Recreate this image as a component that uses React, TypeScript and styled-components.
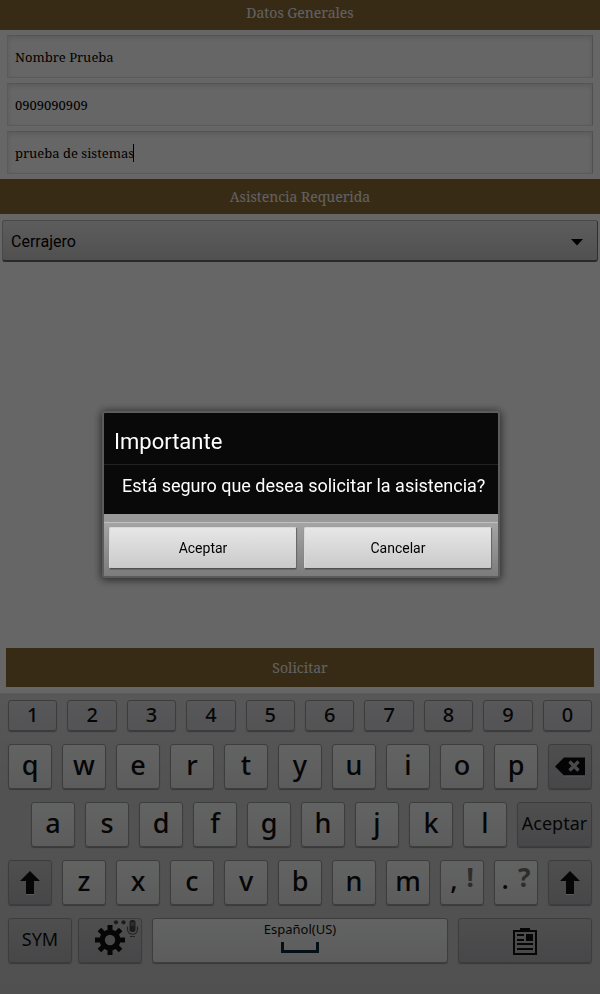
import React from 'react';
import styled, { createGlobalStyle, css } from 'styled-components';

const SERIF = '"Noto Serif", "DejaVu Serif Condensed", "DejaVu Serif", serif';
const ROBOTO = 'Roboto, "Noto Sans", sans-serif';
const KEYS = '"Noto Sans", "Open Sans", sans-serif';

const GlobalStyle = createGlobalStyle`
  *, *::before, *::after { box-sizing: border-box; }
  body { margin: 0; background: #fff; }
  button, input, select { margin: 0; font: inherit; color: inherit; }
`;

const Page = styled.div`
  display: flex;
  flex-direction: column;
  min-height: 100vh;
  background: #fff;
  color: #000;
`;

const SectionBar = styled.h2<{ $top?: boolean }>`
  display: flex;
  align-items: center;
  justify-content: center;
  height: ${(p) => (p.$top ? 30 : 35)}px;
  margin: 0;
  padding-bottom: ${(p) => (p.$top ? 4 : 0)}px;
  background: #8c6c37;
  color: #f4f4f4;
  font: 400 14px/20px ${SERIF};
`;

const Fields = styled.div`
  display: flex;
  flex-direction: column;
  gap: 5px;
  padding: 5px 7px;
`;

const Field = styled.label`
  position: relative;
  display: block;
`;

const TextBox = styled.input`
  display: block;
  width: 100%;
  height: 43px;
  padding: 0 7px;
  border: 1px solid #e4e4e4;
  border-top-color: #d4d4d4;
  border-right-color: #c8c8c8;
  border-radius: 0;
  outline: none;
  background: #fff;
  box-shadow: inset 0 2px 5px rgba(0, 0, 0, 0.12);
  color: #000;
  font: 13px/20px ${SERIF};
`;

const Caret = styled.span`
  position: absolute;
  top: 13px;
  left: 126px;
  width: 1px;
  height: 18px;
  background: #000;
`;

const Dropdown = styled.label`
  display: grid;
  align-items: center;
  margin: 6px 2px;

  > * { grid-area: 1 / 1; }
  > svg { justify-self: end; margin: 2px 14px 0 0; pointer-events: none; }
`;

const Select = styled.select`
  appearance: none;
  width: 100%;
  height: 42px;
  padding: 2px 40px 0 8px;
  border: 1px solid #b4b4b4;
  border-right-color: #777;
  border-bottom: 2px solid #686868;
  border-radius: 3px;
  background: linear-gradient(#e8e8e8, #c9c9c9);
  font: 16px/20px ${ROBOTO};
`;

const SubmitButton = styled.button`
  height: 39px;
  margin: auto 6px 6px;
  border: 0;
  background: #8c6c37;
  color: #f4f4f4;
  font: 14px/20px ${SERIF};
`;

const Keyboard = styled.div`
  display: flex;
  flex-direction: column;
  gap: 13px;
  padding: 7px 8px 31px;
  background: linear-gradient(#dadada, #cecece 30%, #c9c9c9);
  box-shadow: inset 0 1px #e4e4e4;
`;

const KeyRow = styled.div<{ $indent?: number }>`
  display: flex;
  gap: 10px;
  padding-left: ${(p) => p.$indent ?? 0}px;
`;

const KeyPair = styled.div`
  display: flex;
  flex: 134 1 134px;
  gap: 6px;
`;

type Tone = 'number' | 'letter' | 'action';

const tones = {
  number: css`
    height: 31px;
    padding-bottom: 2px;
    background: linear-gradient(#dcdce0, #d0d0d4);
    font-size: 20px;
  `,
  letter: css`
    height: 45px;
    padding-bottom: 4px;
    background: linear-gradient(#f4f8f5, #e6e6e6);
    font-size: 27px;
  `,
  action: css`
    height: 45px;
    padding-bottom: 4px;
    background: linear-gradient(#c4c4c6, #b2b2b6);
    font-size: 18px;
    font-weight: 400;
  `,
};

const Key = styled.button<{ $tone: Tone; $size?: number; $icon?: boolean }>`
  display: flex;
  flex: ${(p) => p.$size ?? 44} 1 ${(p) => p.$size ?? 44}px;
  align-items: center;
  justify-content: center;
  min-width: 0;
  padding: 0;
  border: 1px solid #989898;
  border-radius: 3px;
  box-shadow: 0 1px 1px #8c8c8c;
  font-family: ${KEYS};
  font-weight: 500;
  line-height: 1;
  color: #101010;
  ${(p) => tones[p.$tone]}
  ${(p) => p.$icon && 'padding-bottom: 0;'}
`;

const Symbols = styled.span`
  display: flex;
  gap: 9px;
  height: 100%;
  padding-top: 4px;
`;

const Hint = styled.span`
  margin-top: -1px;
  color: #707070;
  font-size: 26px;
  font-weight: 700;
`;

const SpaceLabel = styled.span`
  display: flex;
  flex-direction: column;
  align-items: center;
  gap: 6px;
  height: 100%;
  padding-top: 3px;
  font: 400 13px/14px ${KEYS};
`;

const Scrim = styled.div`
  position: fixed;
  inset: 0;
  display: flex;
  align-items: center;
  justify-content: center;
  padding: 0 100px 6px 102px;
  background: rgba(0, 0, 0, 0.6);
`;

const Dialog = styled.section`
  width: 100%;
  max-width: 480px;
  border: 2px solid #5c5c5c;
  border-radius: 3px;
  background: #090909;
  box-shadow: 0 1px 8px 1px rgba(0, 0, 0, 0.6);
  color: #fff;
  font-family: ${ROBOTO};
`;

const DialogTitle = styled.h1`
  margin: 0;
  padding: 15px 10px 8px;
  border-bottom: 1px solid #222;
  font-size: 22px;
  font-weight: 400;
  line-height: 28px;
`;

const DialogMessage = styled.p`
  margin: 0;
  padding: 9px 10px 16px 18px;
  font-size: 18px;
  line-height: 24px;
`;

const DialogFooter = styled.div`
  display: grid;
  grid-template-columns: 1fr 1fr;
  gap: 7px;
  padding: 4px 6px 7px 5px;
  border-top: 1px solid #c0c0c0;
  background: linear-gradient(#a4a4a4, #7c7c7c);
`;

const DialogBand = styled.div`
  height: 8px;
  background: #999;
`;

const DialogButton = styled.button`
  height: 42px;
  border: 1px solid #d8d8d8;
  border-right-color: #686868;
  border-bottom-color: #505050;
  border-radius: 2px;
  background: linear-gradient(#e6e6e6, #cacaca);
  box-shadow: 0 1px 1px #666;
  color: #000;
  font: 14px/20px ${ROBOTO};
`;

const ShiftIcon = () => (
  <svg width="20" height="24" viewBox="0 0 20 24" aria-hidden="true">
    <path d="M10 0 20 10H14V23H6V10H0Z" fill="#101010" />
    <path d="M6 23.5H14" stroke="#e0e0e0" />
  </svg>
);

const BackspaceIcon = () => (
  <svg width="30" height="20" viewBox="0 0 30 20" aria-hidden="true">
    <path d="M0 9.500 9 .5H30V18.500H9Z" fill="#0c0c0c" />
    <path d="m14.500 4.500 9 9m0-9-9 9" stroke="#b8b8ba" strokeWidth="3.400" />
    <path d="M9 19H30" stroke="#dcdcdc" />
  </svg>
);

const SettingsIcon = () => (
  <svg width="62" height="43" viewBox="0 0 62 43" aria-hidden="true">
    <g transform="translate(31 21)" fill="#101010">
      {[0, 45, 90, 135].map((angle) => (
        <rect key={angle} x="-2.500" y="-15" width="5" height="30" transform={`rotate(${angle})`} />
      ))}
      <circle r="10.500" />
      <circle r="5.200" fill="#b9b9bc" />
    </g>
    <g fill="#484848">
      <circle cx="37" cy="3.300" r="2.100" />
      <circle cx="44.500" cy="3.300" r="2.100" />
      <rect x="50.500" y="1" width="6" height="12" rx="2.500" />
    </g>
    <path d="M51.500 4H55.500M51.500 6H55.500" stroke="#999" />
    <path d="M48.500 7.500V10C48.500 17 58.500 17 58.500 10V7.500M51 17.500H56" fill="none" stroke="#585858" strokeWidth="1.200" />
  </svg>
);

const SpaceIcon = () => (
  <svg width="38" height="12" viewBox="0 0 38 12" aria-hidden="true">
    <path d="M1.500 0V9.500H36.500V0" fill="none" stroke="#0c2836" strokeWidth="3" />
  </svg>
);

const ClipboardIcon = () => (
  <svg width="24" height="31" viewBox="0 -3 24 31" aria-hidden="true">
    <path d="M7 0H17V2H24V27H0V2H7ZM2 4V25H22V4Z" fill="#101010" fillRule="evenodd" />
    <path d="M4 7H11M4 12H11M4 16H20M4 21H20" stroke="#101010" strokeWidth="2" />
    <rect x="13" y="6" width="7" height="7" fill="#101010" />
  </svg>
);

const letters = (row: string) =>
  row.split('').map((char) => (
    <Key key={char} type="button" $tone="letter">
      {char}
    </Key>
  ));

export default function App() {
  return (
    <>
      <GlobalStyle />
      <Page>
        <SectionBar $top>Datos Generales</SectionBar>
        <Fields>
          <Field>
            <TextBox aria-label="Nombre" defaultValue="Nombre Prueba" />
          </Field>
          <Field>
            <TextBox aria-label="Teléfono" inputMode="tel" defaultValue="0909090909" />
          </Field>
          <Field>
            <TextBox aria-label="Detalle" defaultValue="prueba de sistemas" />
            <Caret />
          </Field>
        </Fields>
        <SectionBar>Asistencia Requerida</SectionBar>
        <Dropdown>
          <Select aria-label="Asistencia requerida" defaultValue="Cerrajero">
            <option>Cerrajero</option>
          </Select>
          <svg width="14" height="8" viewBox="0 0 14 8" aria-hidden="true">
            <path d="M1 1H13L7 7.500Z" fill="#000" />
          </svg>
        </Dropdown>
        <SubmitButton type="button">Solicitar</SubmitButton>

        <Keyboard>
          <KeyRow>
            {'1234567890'.split('').map((digit) => (
              <Key key={digit} type="button" $tone="number">
                {digit}
              </Key>
            ))}
          </KeyRow>
          <KeyRow>
            {letters('qwertyuiop')}
            <Key type="button" $tone="action" $icon aria-label="Borrar">
              <BackspaceIcon />
            </Key>
          </KeyRow>
          <KeyRow $indent={23}>
            {letters('asdfghjkl')}
            <Key type="button" $tone="action" $size={75}>
              Aceptar
            </Key>
          </KeyRow>
          <KeyRow>
            <Key type="button" $tone="action" $icon aria-label="Mayúsculas">
              <ShiftIcon />
            </Key>
            {letters('zxcvbnm')}
            <Key type="button" $tone="letter" $icon>
              <Symbols>
                ,<Hint>!</Hint>
              </Symbols>
            </Key>
            <Key type="button" $tone="letter" $icon>
              <Symbols>
                .<Hint>?</Hint>
              </Symbols>
            </Key>
            <Key type="button" $tone="action" $icon aria-label="Mayúsculas">
              <ShiftIcon />
            </Key>
          </KeyRow>
          <KeyRow>
            <KeyPair>
              <Key type="button" $tone="action" $size={64}>
                SYM
              </Key>
              <Key type="button" $tone="action" $size={64} $icon aria-label="Ajustes">
                <SettingsIcon />
              </Key>
            </KeyPair>
            <Key type="button" $tone="letter" $size={296} $icon>
              <SpaceLabel>
                Español(US)
                <SpaceIcon />
              </SpaceLabel>
            </Key>
            <Key type="button" $tone="action" $size={134} $icon aria-label="Portapapeles">
              <ClipboardIcon />
            </Key>
          </KeyRow>
        </Keyboard>
      </Page>

      <Scrim>
        <Dialog role="alertdialog" aria-modal="true" aria-labelledby="dialog-title" aria-describedby="dialog-message">
          <DialogTitle id="dialog-title">Importante</DialogTitle>
          <DialogMessage id="dialog-message">Está seguro que desea solicitar la asistencia?</DialogMessage>
          <DialogBand />
          <DialogFooter>
            <DialogButton type="button">Aceptar</DialogButton>
            <DialogButton type="button">Cancelar</DialogButton>
          </DialogFooter>
        </Dialog>
      </Scrim>
    </>
  );
}
